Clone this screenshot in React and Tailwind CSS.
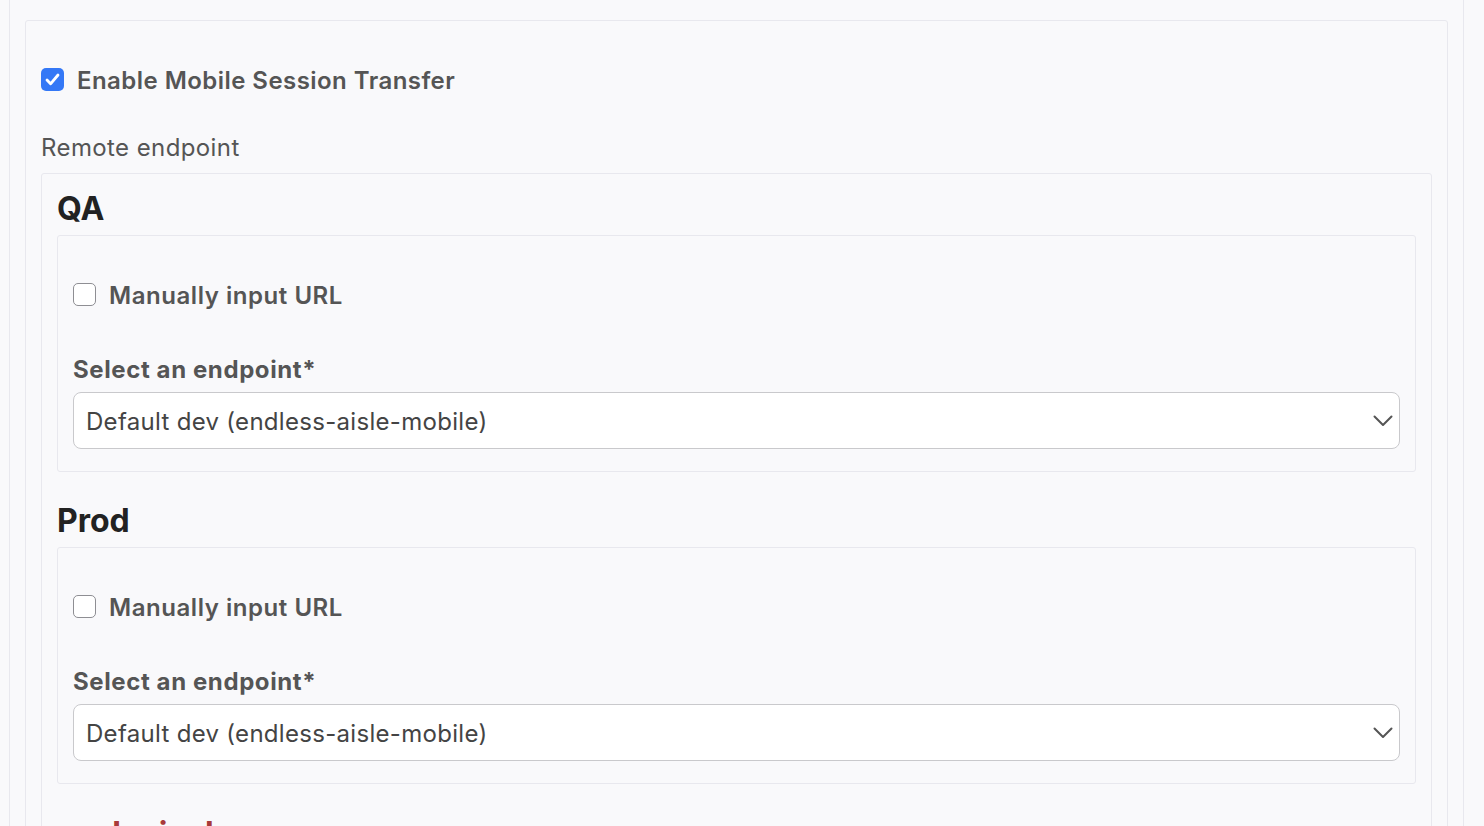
import React from "react";

const CheckBox = ({ checked }) => {
  if (checked) {
    return (
      <span className="flex h-[23px] w-[23px] shrink-0 items-center justify-center rounded-[5px] bg-[#3478f6]">
        <svg width="15" height="13" viewBox="0 0 15 13" fill="none">
          <path d="M2 7l3.6 3.8L13 2" stroke="#fff" strokeWidth="2.8" strokeLinecap="round" strokeLinejoin="round" />
        </svg>
      </span>
    );
  }
  return <span className="block h-[23px] w-[23px] shrink-0 rounded-[5px] border-[1.5px] border-[#8e8e93] bg-white" />;
};

const Chevron = () => (
  <svg width="20" height="12" viewBox="0 0 20 12" fill="none">
    <path d="M1.5 1.5l8.5 8.5 8.5-8.5" stroke="#555" strokeWidth="2" strokeLinecap="round" strokeLinejoin="round" />
  </svg>
);

const EndpointBox = () => (
  <div className="rounded-[3px] border border-[#e8e8ee] px-[15px] pt-[15px] pb-[22px]">
    <label className="mt-[25px] flex h-[36px] items-center gap-[13px]">
      <CheckBox checked={false} />
      <span className="pt-[3px] text-[24px] font-semibold leading-[36px] tracking-[0.55px] text-[#555]">Manually input URL</span>
    </label>
    <div className="mt-[40px] text-[24px] font-bold leading-[36px] tracking-[0.6px] text-[#555]">Select an endpoint*</div>
    <div className="mt-[4px] flex h-[57px] items-center justify-between rounded-[8px] border border-[#c9c9cc] bg-white pl-[12px] pr-[6px]">
      <span className="pt-[2px] text-[24px] leading-[36px] tracking-[0.3px] text-[#444]">Default dev (endless-aisle-mobile)</span>
      <Chevron />
    </div>
  </div>
);

export default function App() {
  return (
    <div className="min-h-[826px] overflow-hidden bg-[#f9f9fb] font-['Inter','Liberation_Sans',sans-serif]">
      <div className="ml-[9px] mr-[20px] border-x border-[#e8e8ee] px-[15px] pt-[20px]">
        <div className="rounded-[3px] border border-[#e8e8ee] px-[15px] pt-[15px]">
          <label className="mt-[25px] flex h-[36px] items-center gap-[13px]">
            <CheckBox checked />
            <span className="pt-[3px] text-[24px] font-semibold leading-[36px] tracking-[0.45px] text-[#555]">Enable Mobile Session Transfer</span>
          </label>
          <div className="mt-[33px] text-[24px] leading-[36px] tracking-[0.4px] text-[#555]">Remote endpoint</div>
          <div className="mt-[7px] rounded-[3px] border border-[#e8e8ee] px-[15px] pt-[15px] pb-[40px]">
            <h2 className="text-[32px] font-bold leading-[40px] text-[#222]">QA</h2>
            <div className="mt-[6px]">
              <EndpointBox />
            </div>
            <h2 className="mt-[29px] text-[32px] font-bold leading-[40px] text-[#222]">Prod</h2>
            <div className="mt-[6px]">
              <EndpointBox />
            </div>
            <h2 className="mt-[30px] text-[32px] font-bold leading-[40px] text-[#a83a3a]">exclusively</h2>
          </div>
        </div>
      </div>
    </div>
  );
}
